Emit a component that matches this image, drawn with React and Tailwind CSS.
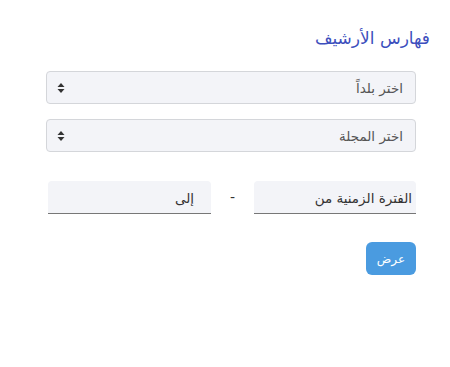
import React from 'react';

function SelectBox({ label }) {
  return (
    <div className="relative h-[33px] w-full rounded-[4px] border border-[#d4d6da] bg-[#f3f4f8]">
      <span className="absolute right-[12px] top-[6px] text-[13.5px] text-[#555]">{label}</span>
      <svg className="absolute left-[10px] top-[11px]" width="8" height="10" viewBox="0 0 8 10">
        <path d="M4 0 L7.5 4 H0.5 Z" fill="#333" />
        <path d="M4 10 L7.5 6 H0.5 Z" fill="#333" />
      </svg>
    </div>
  );
}

export default function App() {
  return (
    <div dir="rtl" className="w-[450px] h-[367px] bg-white" style={{ fontFamily: '"DejaVu Sans", sans-serif' }}>
      <div className="pr-[20px] pt-[24px]">
        <h1 className="text-[17px] leading-[28px] text-[#3d4fbd]">فهارس الأرشيف</h1>
      </div>
      <div className="pr-[34px] pl-[46px] pt-[19px] flex flex-col gap-[15px]">
        <SelectBox label="اختر بلداً" />
        <SelectBox label="اختر المجلة" />
      </div>
      <div className="pr-[34px] pl-[48px] pt-[29px] flex items-center">
        <div className="h-[33px] w-[162px] rounded-t-[4px] border-b border-[#777] bg-[#f3f4f8] pr-[4px] pt-[7px] text-[13.5px] text-[#333]">الفترة الزمنية من</div>
        <div className="flex-1 text-center text-[14px] text-[#333]">-</div>
        <div className="h-[33px] w-[163px] rounded-t-[4px] border-b border-[#777] bg-[#f3f4f8] pr-[17px] pt-[7px] text-[13.5px] text-[#333]">إلى</div>
      </div>
      <div className="pr-[34px] pt-[28px] flex">
        <button className="h-[33px] w-[50px] rounded-[6px] bg-[#4a9be0] text-[12px] text-white">عرض</button>
      </div>
    </div>
  );
}
